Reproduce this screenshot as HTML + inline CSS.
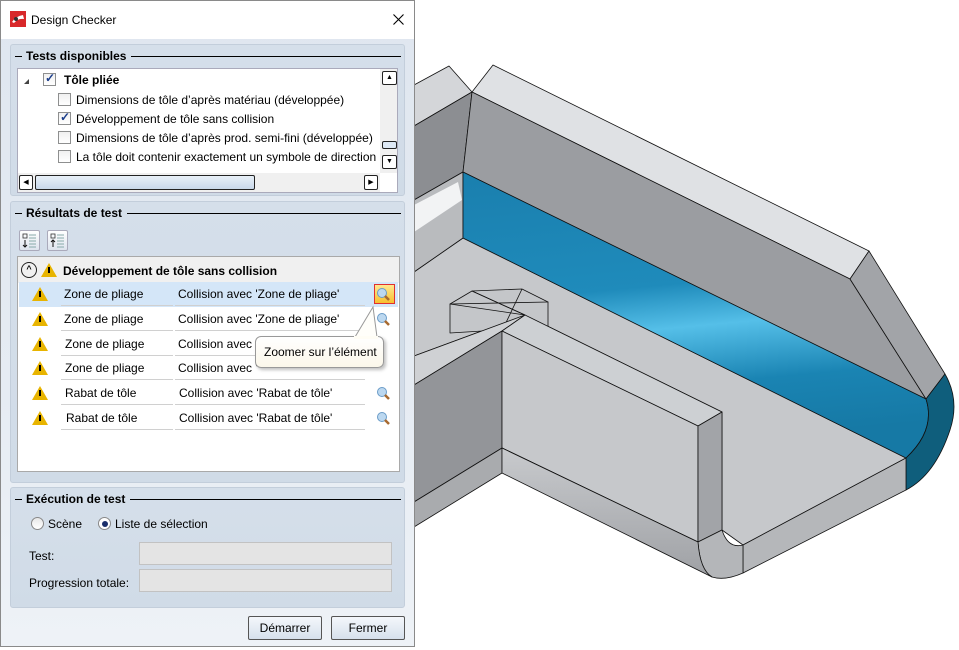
<!DOCTYPE html>
<html><head><meta charset="utf-8"><style>
*{box-sizing:border-box;margin:0;padding:0}
body{width:959px;height:650px;background:#fff;position:relative;overflow:hidden;font-family:"Liberation Sans",sans-serif;font-size:12px;color:#000}
.abs{position:absolute}
#dlg{left:0;top:0;width:415px;height:647px;border:1px solid #8a8a8a;background:linear-gradient(#dfe6ef,#e6ecf3 60%,#eef2f7);}
#title{left:0;top:0;width:413px;height:38px;background:#fff}
.grp{position:absolute;left:9px;width:395px;border:1px solid #c3cedb;border-radius:3px;background:linear-gradient(#d5dfea,#d0dbe7)}
.gt{position:absolute;left:4px;top:4px;font-weight:bold;font-size:12px;display:flex;align-items:center;width:386px}
.gt:before{content:"";width:7px;border-top:1px solid #000;margin-right:4px}
.gt:after{content:"";flex:1;border-top:1px solid #000;margin-left:5px}
.cb{position:absolute;width:13px;height:13px;border:1px solid #8e8f8f;background:linear-gradient(#f0f0f0,#fff)}
.ck{position:absolute;left:1px;top:-3px;color:#1b3d8a;font-size:12px;font-weight:bold}
.row{position:absolute;left:1px;width:379px;height:25px}
.cell{position:absolute;top:2px;height:22px;border-bottom:1px solid #d0d0d0;line-height:20px}
.warn{position:absolute;left:13px;top:5px;width:0;height:0;border-left:8px solid transparent;border-right:8px solid transparent;border-bottom:14px solid #e8b400}
.warn i{position:absolute;left:-1px;top:4px;width:2px;height:6px;background:#000}
.btn{position:absolute;top:615px;height:24px;border:1px solid #555;border-radius:2px;background:linear-gradient(#f4f7fb,#d6e0ec);text-align:center;line-height:22px}
.inp{position:absolute;left:138px;width:253px;height:23px;background:#e4e4e4;border:1px solid #c2c2c2}
</style></head><body>

<svg class="abs" style="left:0;top:0" width="959" height="650">
<defs>
<linearGradient id="bl" x1="0" y1="0" x2="0.15" y2="1"><stop offset="0" stop-color="#1a7fae"/><stop offset="0.45" stop-color="#1f8bbb"/><stop offset="0.6" stop-color="#55bfe8"/><stop offset="0.8" stop-color="#1a84b3"/><stop offset="1" stop-color="#1679a5"/></linearGradient>
<linearGradient id="fil" x1="0" y1="0" x2="0" y2="1"><stop offset="0" stop-color="#c8cacd"/><stop offset="1" stop-color="#9fa1a5"/></linearGradient>
</defs>
<g stroke="#111" stroke-width="0.8" stroke-linejoin="round">
<!-- floor -->
<polygon points="414,272 463,238 906,458 743,545 722,530 722,412 525,315 414,356" fill="#c6c8cb"/>
<!-- left back wall -->
<polygon points="414,85 449,66 472,92 414,126" fill="#d4d6d9"/>
<polygon points="414,126 472,92 463,172 414,200" fill="#8c8e92"/>
<polygon points="414,200 463,172 463,238 414,272" fill="#b9bbbe"/>
<polygon points="414,205 458,182 462,200 414,232" fill="#f2f3f4" stroke="none"/>
<!-- top of back wall -->
<polygon points="472,92 493,65 869,251 850,279" fill="#dfe1e4"/>
<!-- front face back wall -->
<polygon points="472,92 850,279 926,399 463,172" fill="#9b9da1"/>
<!-- side chamfer face -->
<polygon points="869,251 850,279 926,399 945,374" fill="#a2a4a8"/>
<!-- blue fillet -->
<path d="M463,172 L926,399 Q936,430 906,458 L463,238 Z" fill="url(#bl)"/>
<path d="M945,374 Q960,400 950,430 Q935,475 906,490 L906,458 Q936,430 926,399 Z" fill="#0f5e7c"/>
<!-- floor front right -->
<polygon points="906,458 906,490 743,573 743,545" fill="#b5b7ba"/>
<!-- slot box -->
<polygon points="450,304 472,291 522,289 548,302 548,327 450,333" fill="#c4c6c9"/>
<polygon points="450,304 548,302" fill="none"/>
<polygon points="472,291 525,315 M522,289" fill="none"/>
<line x1="472" y1="291" x2="525" y2="315"/><line x1="522" y1="289" x2="502" y2="331"/><line x1="450" y1="304" x2="525" y2="315"/>
<!-- left wall top -->
<polygon points="414,356 525,315 502,331 414,385" fill="#cfd1d4"/>
<!-- rib top face -->
<polygon points="502,331 525,315 722,412 698,426" fill="#cdd0d3"/>
<!-- left wall face -->
<polygon points="414,385 502,331 502,448 414,502" fill="#939599"/>
<polygon points="414,502 502,448 502,473 414,527" fill="#a9abae"/>
<!-- rib front face -->
<polygon points="502,331 698,426 698,542 502,448" fill="#c6c8cb"/>
<!-- rib end face -->
<polygon points="698,426 722,412 722,530 698,542" fill="#a2a4a8"/>
<!-- fillet under rib -->
<path d="M502,448 L698,542 Q700,570 712,577 Q725,581 743,573 L743,545 Q728,549 722,530 L698,542 Z" fill="#b4b6b9"/>
<path d="M502,448 L698,542 Q700,570 712,577 L502,473 Z" fill="url(#fil)"/>
</g>
</svg>

<div id="dlg" class="abs">
<div id="title" class="abs">
 <svg class="abs" style="left:9px;top:10px" width="16" height="16"><rect width="16" height="16" fill="#d8282a"/><path d="M2,11 Q6,5 13,4 L14,8 Q8,7 4,12Z" fill="#fff"/><circle cx="6" cy="8" r="2" fill="#333"/></svg>
 <div class="abs" style="left:30px;top:12px;font-size:12px">Design Checker</div>
 <svg class="abs" style="left:392px;top:13px" width="11" height="11"><path d="M0.5,0.5L10.5,10.5M10.5,0.5L0.5,10.5" stroke="#000" stroke-width="1.1"/></svg>
</div>

<div class="grp" style="top:43px;height:152px">
 <div class="gt">Tests disponibles</div>
 <div class="abs" style="left:6px;top:23px;width:381px;height:125px;background:#fff;border:1px solid #aab">
  <div class="abs" style="left:6px;top:10px;width:0;height:0;border-left:5px solid transparent;border-bottom:5px solid #444"></div>
  <div class="cb" style="left:25px;top:4px"><span class="ck">✓</span></div>
  <div class="abs" style="left:46px;top:4px;font-weight:bold">Tôle pliée</div>
  <div class="cb" style="left:40px;top:24px"></div><div class="abs" style="left:58px;top:24px">Dimensions de tôle d’après matériau (développée)</div>
  <div class="cb" style="left:40px;top:43px"><span class="ck">✓</span></div><div class="abs" style="left:58px;top:43px">Développement de tôle sans collision</div>
  <div class="cb" style="left:40px;top:62px"></div><div class="abs" style="left:58px;top:62px">Dimensions de tôle d’après prod. semi-fini (développée)</div>
  <div class="cb" style="left:40px;top:81px"></div><div class="abs" style="left:58px;top:81px;white-space:nowrap">La tôle doit contenir exactement un symbole de direction</div>
  <div class="abs" style="left:362px;top:0;width:17px;height:104px;background:#f0f0f0"></div>
  <div class="abs" style="left:364px;top:2px;width:15px;height:14px;border:1px solid #222;border-radius:2px;background:#fff;font-size:7px;text-align:center;line-height:12px">▲</div>
  <div class="abs" style="left:364px;top:72px;width:15px;height:8px;border:1px solid #222;border-radius:2px;background:#dde8f4"></div>
  <div class="abs" style="left:364px;top:86px;width:15px;height:14px;border:1px solid #222;border-radius:2px;background:#fff;font-size:7px;text-align:center;line-height:12px">▼</div>
  <div class="abs" style="left:0;top:104px;width:362px;height:19px;background:#f0f0f0"></div>
  <div class="abs" style="left:1px;top:106px;width:14px;height:15px;border:1px solid #222;border-radius:2px;background:#fff;font-size:7px;text-align:center;line-height:13px">◀</div>
  <div class="abs" style="left:17px;top:106px;width:220px;height:15px;border:1px solid #222;border-radius:2px;background:linear-gradient(#e8f0f8,#c8d8ea)"></div>
  <div class="abs" style="left:346px;top:106px;width:14px;height:15px;border:1px solid #222;border-radius:2px;background:#fff;font-size:7px;text-align:center;line-height:13px">▶</div>
 </div>
</div>

<div class="grp" style="top:200px;height:282px">
 <div class="gt">Résultats de test</div>
 <div class="abs" style="left:8px;top:28px;width:21px;height:21px;border:1px solid #aab;border-radius:2px;background:linear-gradient(#fff,#dde4ee)">
  <svg width="19" height="19"><rect x="3" y="3" width="4" height="4" fill="none" stroke="#333" stroke-width="0.8"/><path d="M5,9V16M3,14L5,16L7,14" stroke="#111" fill="none"/><path d="M9,4H16M9,7H16M9,10H16M9,13H16M9,16H16" stroke="#8aa" stroke-width="1"/></svg></div>
 <div class="abs" style="left:36px;top:28px;width:21px;height:21px;border:1px solid #aab;border-radius:2px;background:linear-gradient(#fff,#dde4ee)">
  <svg width="19" height="19"><rect x="3" y="3" width="4" height="4" fill="none" stroke="#333" stroke-width="0.8"/><path d="M5,16V9M3,11L5,9L7,11" stroke="#111" fill="none"/><path d="M9,4H16M9,7H16M9,10H16M9,13H16M9,16H16" stroke="#8aa" stroke-width="1"/></svg></div>
 <div class="abs" style="left:6px;top:54px;width:383px;height:216px;background:#fff;border:1px solid #a9a9a9">
  <div class="abs" style="left:0;top:0;width:381px;height:26px;background:#f0f0f0"></div>
  <div class="abs" style="left:3px;top:5px;width:16px;height:16px;border:1.5px solid #222;border-radius:50%;font-size:9px;text-align:center;line-height:13px;font-weight:bold">^</div>
  <div class="warn" style="left:23px;top:6px"><i></i></div>
  <div class="abs" style="left:45px;top:7px;font-weight:bold">Développement de tôle sans collision</div>
  <div class="row" style="top:25px;background:#d4e6f8"></div>
  <div class="row" style="top:25px"><div class="warn"><i></i></div><div class="cell" style="left:42px;width:112px;padding-left:3px">Zone de pliage</div><div class="cell" style="left:156px;width:190px;padding-left:3px">Collision avec 'Zone de pliage'</div>
   <div class="abs" style="left:355px;top:2px;width:21px;height:20px;border:1px solid #e03030;background:linear-gradient(#ffe890,#f8c030)"></div></div>
  <div class="row" style="top:50px"><div class="warn"><i></i></div><div class="cell" style="left:42px;width:112px;padding-left:3px">Zone de pliage</div><div class="cell" style="left:156px;width:190px;padding-left:3px">Collision avec 'Zone de pliage'</div></div>
  <div class="row" style="top:75px"><div class="warn"><i></i></div><div class="cell" style="left:42px;width:112px;padding-left:4px">Zone de pliage</div><div class="cell" style="left:156px;width:190px;padding-left:3px">Collision avec '</div></div>
  <div class="row" style="top:99px"><div class="warn"><i></i></div><div class="cell" style="left:42px;width:112px;padding-left:4px">Zone de pliage</div><div class="cell" style="left:156px;width:190px;padding-left:3px">Collision avec '</div></div>
  <div class="row" style="top:124px"><div class="warn"><i></i></div><div class="cell" style="left:42px;width:112px;padding-left:4px">Rabat de tôle</div><div class="cell" style="left:156px;width:190px;padding-left:4px">Collision avec 'Rabat de tôle'</div></div>
  <div class="row" style="top:149px"><div class="warn"><i></i></div><div class="cell" style="left:42px;width:112px;padding-left:5px">Rabat de tôle</div><div class="cell" style="left:156px;width:190px;padding-left:4px">Collision avec 'Rabat de tôle'</div></div>
  <svg class="abs" style="left:358px;top:30px" width="16" height="150">
   <g fill="#bcd8f0" stroke="#6a9cc8"><circle cx="6" cy="6" r="4.5"/><circle cx="6" cy="31" r="4.5"/><circle cx="6" cy="105" r="4.5"/><circle cx="6" cy="130" r="4.5"/></g>
   <g stroke="#a86a30" stroke-width="2.5"><path d="M9,9L13,13M9,34L13,38M9,108L13,112M9,133L13,137"/></g>
  </svg>
 </div>
</div>

<div class="abs" style="left:254px;top:335px;width:129px;height:32px;background:linear-gradient(#fff,#fbf7ea);border:1px solid #999;border-radius:6px;box-shadow:2px 2px 3px rgba(0,0,0,.25);padding:8px 0 0 8px">Zoomer sur l’élément</div>
<svg class="abs" style="left:350px;top:302px" width="30" height="36"><path d="M4,34 L22,4 L26,34Z" fill="#fffefa" stroke="#999"/><rect x="3" y="33" width="24" height="3" fill="#fffdf5"/></svg>

<div class="grp" style="top:486px;height:121px">
 <div class="gt">Exécution de test</div>
 <div class="abs" style="left:20px;top:29px;width:13px;height:13px;border:1px solid #888;border-radius:50%;background:linear-gradient(#e8e8e8,#fff)"></div>
 <div class="abs" style="left:37px;top:29px">Scène</div>
 <div class="abs" style="left:87px;top:29px;width:13px;height:13px;border:1px solid #888;border-radius:50%;background:#fff"><div class="abs" style="left:2.5px;top:2.5px;width:6px;height:6px;border-radius:50%;background:#1b2e6a"></div></div>
 <div class="abs" style="left:104px;top:29px">Liste de sélection</div>
 <div class="abs" style="left:18px;top:61px">Test:</div>
 <div class="abs" style="left:18px;top:88px">Progression totale:</div>
</div>
<div class="inp" style="top:541px"></div>
<div class="inp" style="top:568px"></div>
<div class="btn" style="left:247px;width:74px">Démarrer</div>
<div class="btn" style="left:330px;width:74px">Fermer</div>
</div>
</body></html>
